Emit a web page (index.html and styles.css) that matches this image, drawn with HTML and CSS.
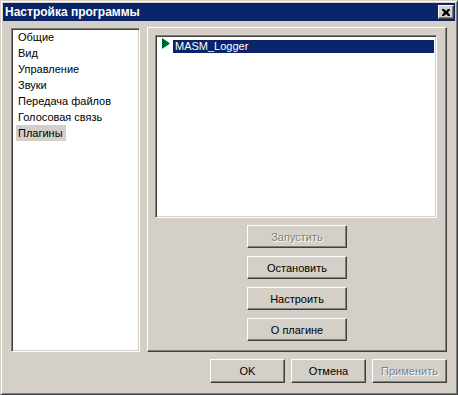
FILE: index.html
```html
<!DOCTYPE html>
<html lang="ru">

<head>
  <meta charset="UTF-8">
  <title>Настройка программы</title>
  <link rel="stylesheet" href="styles.css">
</head>

<body>
  <div class="window">
    <div class="caption">
      <span class="caption-text">Настройка программы</span>
      <span class="close-btn">
        <svg width="8" height="7" viewBox="0 0 8 7">
          <path d="M0 0h2l2 2 2-2h2v1l-2 2.5 2 2.5v1h-2l-2-2-2 2h-2v-1l2-2.5-2-2.5z" fill="#000" />
        </svg>
      </span>
    </div>

    <div class="content">
      <div class="sections sunken">
        <div class="section">Общие</div>
        <div class="section">Вид</div>
        <div class="section">Управление</div>
        <div class="section">Звуки</div>
        <div class="section">Передача файлов</div>
        <div class="section">Голосовая связь</div>
        <div class="section"><span class="current">Плагины</span></div>
      </div>

      <div class="group">
        <div class="plugins sunken">
          <div class="plugin">
            <svg class="plugin-icon" width="8" height="11" viewBox="0 0 8 11">
              <defs>
                <pattern id="dither" width="2" height="2" patternUnits="userSpaceOnUse">
                  <rect width="2" height="2" fill="#0a246a" />
                  <rect width="1" height="1" fill="#008040" />
                  <rect x="1" y="1" width="1" height="1" fill="#008040" />
                </pattern>
              </defs>
              <polygon points="0,0 8,5.5 0,11" fill="url(#dither)" />
            </svg>
            <span class="plugin-name">MASM_Logger</span>
          </div>
        </div>

        <div class="actions">
          <button class="btn disabled">Запустить</button>
          <button class="btn">Остановить</button>
          <button class="btn">Настроить</button>
          <button class="btn">О плагине</button>
        </div>
      </div>
    </div>

    <div class="footer">
      <button class="btn small">OK</button>
      <button class="btn small">Отмена</button>
      <button class="btn small disabled">Применить</button>
    </div>
  </div>
</body>

</html>
```

FILE: styles.css
```css
* {
  box-sizing: border-box;
}

body {
  margin: 0;
  font-family: "Liberation Sans", Arial, sans-serif;
  font-size: 11px;
  color: #000;
  background: #d4d0c8;
}

.window {
  width: 458px;
  height: 395px;
  padding: 2px;
  background: #d4d0c8;
  border-top: 1px solid #d4d0c8;
  border-left: 1px solid #d4d0c8;
  border-right: 1px solid #404040;
  border-bottom: 1px solid #404040;
  box-shadow: inset 1px 1px #fff, inset -1px -1px #808080;
}

.caption {
  height: 18px;
  display: flex;
  align-items: center;
  justify-content: space-between;
  padding: 0 1px 0 2px;
  background: #0a246a;
}

.caption-text {
  color: #fff;
  font-weight: bold;
  font-size: 12px;
}

.close-btn {
  width: 16px;
  height: 14px;
  display: flex;
  align-items: center;
  justify-content: center;
  background: #d4d0c8;
  border-top: 1px solid #fff;
  border-left: 1px solid #fff;
  border-right: 1px solid #404040;
  border-bottom: 1px solid #404040;
  box-shadow: inset -1px -1px #808080;
}

.content {
  display: flex;
  gap: 7px;
  padding: 6px 0 0 8px;
}

.sunken {
  background: #fff;
  border-top: 1px solid #808080;
  border-left: 1px solid #808080;
  border-right: 1px solid #fff;
  border-bottom: 1px solid #fff;
  box-shadow: inset 1px 1px #404040, inset -1px -1px #d4d0c8;
}

.sections {
  width: 129px;
  height: 324px;
  margin-top: 1px;
  padding: 0 2px;
}

.section {
  height: 16px;
  line-height: 16px;
  padding-left: 4px;
}

.current {
  display: inline-block;
  margin-left: -2px;
  padding: 0 3px 0 2px;
  background: #d4d0c8;
}

.group {
  width: 300px;
  height: 325px;
  padding: 7px;
  border-top: 1px solid #fff;
  border-left: 1px solid #fff;
  border-right: 1px solid #404040;
  border-bottom: 1px solid #404040;
  box-shadow: inset -1px -1px #808080;
}

.plugins {
  width: 282px;
  height: 183px;
  padding: 2px 2px 0 6px;
}

.plugin {
  display: flex;
  align-items: flex-start;
}

.plugin-icon {
  display: block;
  margin-right: 3px;
  flex: none;
}

.plugin-name {
  flex: 1;
  height: 13px;
  line-height: 13px;
  margin-top: 2px;
  padding-left: 2px;
  color: #fff;
  background: #0a246a;
}

.actions {
  display: flex;
  flex-direction: column;
  align-items: center;
  gap: 8px;
  margin-top: 7px;
}

.btn {
  width: 100px;
  height: 23px;
  padding: 0;
  font-family: inherit;
  font-size: 11px;
  font-weight: normal;
  color: #000;
  background: #d4d0c8;
  border-top: 1px solid #fff;
  border-left: 1px solid #fff;
  border-right: 1px solid #404040;
  border-bottom: 1px solid #404040;
  border-radius: 0;
  box-shadow: inset -1px -1px #808080, inset 1px 1px #d4d0c8;
}

.btn.disabled {
  color: #808080;
  text-shadow: 1px 1px #fff;
}

.footer {
  display: flex;
  justify-content: flex-end;
  gap: 6px;
  padding: 7px 8px 0 0;
}

.btn.small {
  width: 75px;
  height: 24px;
}
```
